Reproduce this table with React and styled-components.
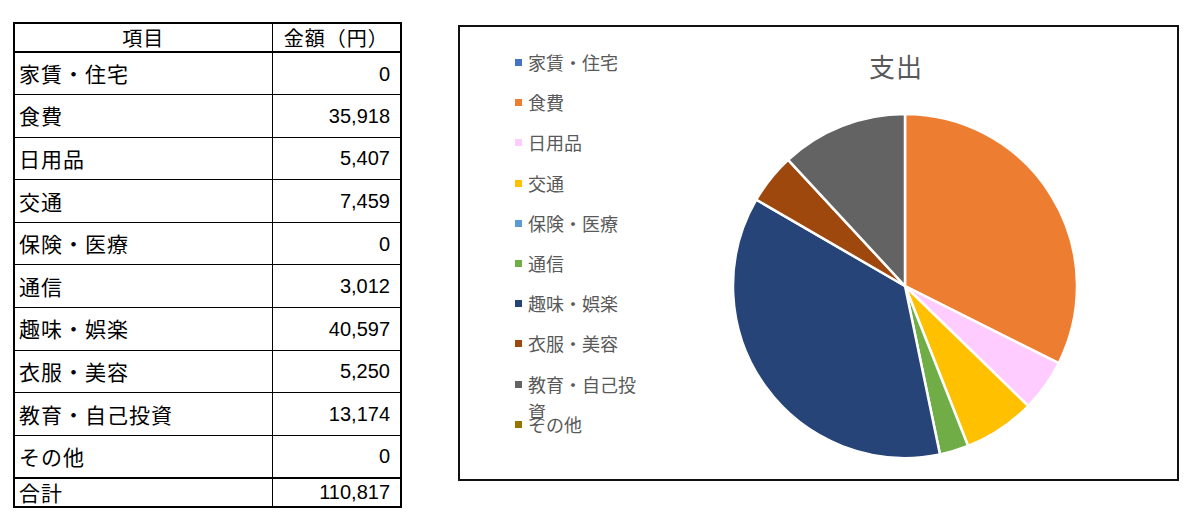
import React from "react";
import styled, { createGlobalStyle } from "styled-components";

const GlobalStyle = createGlobalStyle`
  html, body { margin: 0; padding: 0; background: #ffffff; }
  body { font-family: "Noto Sans CJK JP", "Noto Sans", sans-serif; }
`;

const data = [
  { label: "家賃・住宅", value: 0, color: "#4472C4" },
  { label: "食費", value: 35918, color: "#ED7D31" },
  { label: "日用品", value: 5407, color: "#FFCCFF" },
  { label: "交通", value: 7459, color: "#FFC000" },
  { label: "保険・医療", value: 0, color: "#5B9BD5" },
  { label: "通信", value: 3012, color: "#70AD47" },
  { label: "趣味・娯楽", value: 40597, color: "#264478" },
  { label: "衣服・美容", value: 5250, color: "#9E480E" },
  { label: "教育・自己投資", value: 13174, color: "#636363" },
  { label: "その他", value: 0, color: "#997300" },
];

const total = data.reduce((s, d) => s + d.value, 0);
const fmt = (n) => n.toLocaleString("en-US");

const Page = styled.div`
  display: flex;
  align-items: flex-start;
  padding: 22px 0 0 13px;
  gap: 56px;
`;

const Table = styled.table`
  width: 387px;
  border-collapse: collapse;
  border: 2px solid #000;
  table-layout: fixed;
  color: #000;
`;

const HeadCell = styled.th`
  height: 27px;
  padding: 0;
  font-weight: 400;
  font-size: 20px;
  letter-spacing: 1px;
  text-align: center;
  border: 1px solid #000;
  border-bottom: 2px solid #000;
  font-family: "Noto Sans CJK JP", sans-serif;
  line-height: 1;
`;

const Row = styled.tr`
  height: ${(p) => (p.$total ? "29px" : "42.6px")};
`;

const LabelCell = styled.td`
  padding: 0 0 0 4px;
  font-size: 21px;
  letter-spacing: 1px;
  border: 1px solid #000;
  border-top: ${(p) => (p.$total ? "2px solid #000" : "1px solid #000")};
  font-family: "Noto Sans CJK JP", sans-serif;
  line-height: 1;
  white-space: nowrap;
`;

const NumCell = styled.td`
  padding: 0 10px 0 0;
  font-size: 20px;
  text-align: right;
  border: 1px solid #000;
  border-top: ${(p) => (p.$total ? "2px solid #000" : "1px solid #000")};
  font-family: "Liberation Sans", sans-serif;
  line-height: 1;
`;

const ChartBox = styled.div`
  margin-top: 3px;
  width: 721px;
  height: 456px;
  box-sizing: border-box;
  border: 2px solid #111;
  display: flex;
  align-items: flex-start;
  background: #fff;
`;

const Legend = styled.ul`
  list-style: none;
  margin: 0;
  padding: 22px 0 0 55px;
  display: flex;
  flex-direction: column;
`;

const LegendItem = styled.li`
  height: 40.2px;
  display: flex;
  align-items: flex-start;
  gap: 6px;
`;

const Swatch = styled.span`
  width: 7px;
  height: 7px;
  margin-top: 10px;
  flex: none;
  background: ${(p) => p.$color};
`;

const LegendText = styled.span`
  width: 120px;
  font-size: 18px;
  line-height: 27px;
  color: #595959;
  font-family: "Noto Sans CJK JP", sans-serif;
`;

const PieColumn = styled.div`
  margin-left: auto;
  margin-right: 98px;
  display: flex;
  flex-direction: column;
  align-items: center;
  padding-top: 24px;
`;

const Title = styled.div`
  font-size: 26px;
  line-height: 30px;
  color: #595959;
  margin-right: 18px;
  letter-spacing: 1px;
  font-family: "Noto Sans CJK JP", sans-serif;
`;

const PieSvg = styled.svg`
  margin-top: 31px;
  display: block;
`;

function Pie() {
  const R = 172;
  const C = 174;
  let angle = -Math.PI / 2;
  const slices = [];
  data.forEach((d) => {
    if (d.value <= 0) return;
    const a = (d.value / total) * Math.PI * 2;
    const x1 = C + R * Math.cos(angle);
    const y1 = C + R * Math.sin(angle);
    const x2 = C + R * Math.cos(angle + a);
    const y2 = C + R * Math.sin(angle + a);
    const large = a > Math.PI ? 1 : 0;
    slices.push(
      <path
        key={d.label}
        d={`M${C},${C} L${x1},${y1} A${R},${R} 0 ${large} 1 ${x2},${y2} Z`}
        fill={d.color}
        stroke="#fff"
        strokeWidth="2.5"
        strokeLinejoin="round"
      />
    );
    angle += a;
  });
  return (
    <PieSvg width="348" height="348" viewBox="0 0 348 348">
      {slices}
    </PieSvg>
  );
}

export default function App() {
  return (
    <>
      <GlobalStyle />
      <Page>
        <Table>
          <colgroup>
            <col style={{ width: "258px" }} />
            <col style={{ width: "129px" }} />
          </colgroup>
          <thead>
            <tr>
              <HeadCell>項目</HeadCell>
              <HeadCell>金額（円）</HeadCell>
            </tr>
          </thead>
          <tbody>
            {data.map((d) => (
              <Row key={d.label}>
                <LabelCell>{d.label}</LabelCell>
                <NumCell>{fmt(d.value)}</NumCell>
              </Row>
            ))}
            <Row $total>
              <LabelCell $total>合計</LabelCell>
              <NumCell $total>{fmt(total)}</NumCell>
            </Row>
          </tbody>
        </Table>
        <ChartBox>
          <Legend>
            {data.map((d) => (
              <LegendItem key={d.label}>
                <Swatch $color={d.color} />
                <LegendText>{d.label}</LegendText>
              </LegendItem>
            ))}
          </Legend>
          <PieColumn>
            <Title>支出</Title>
            <Pie />
          </PieColumn>
        </ChartBox>
      </Page>
    </>
  );
}
